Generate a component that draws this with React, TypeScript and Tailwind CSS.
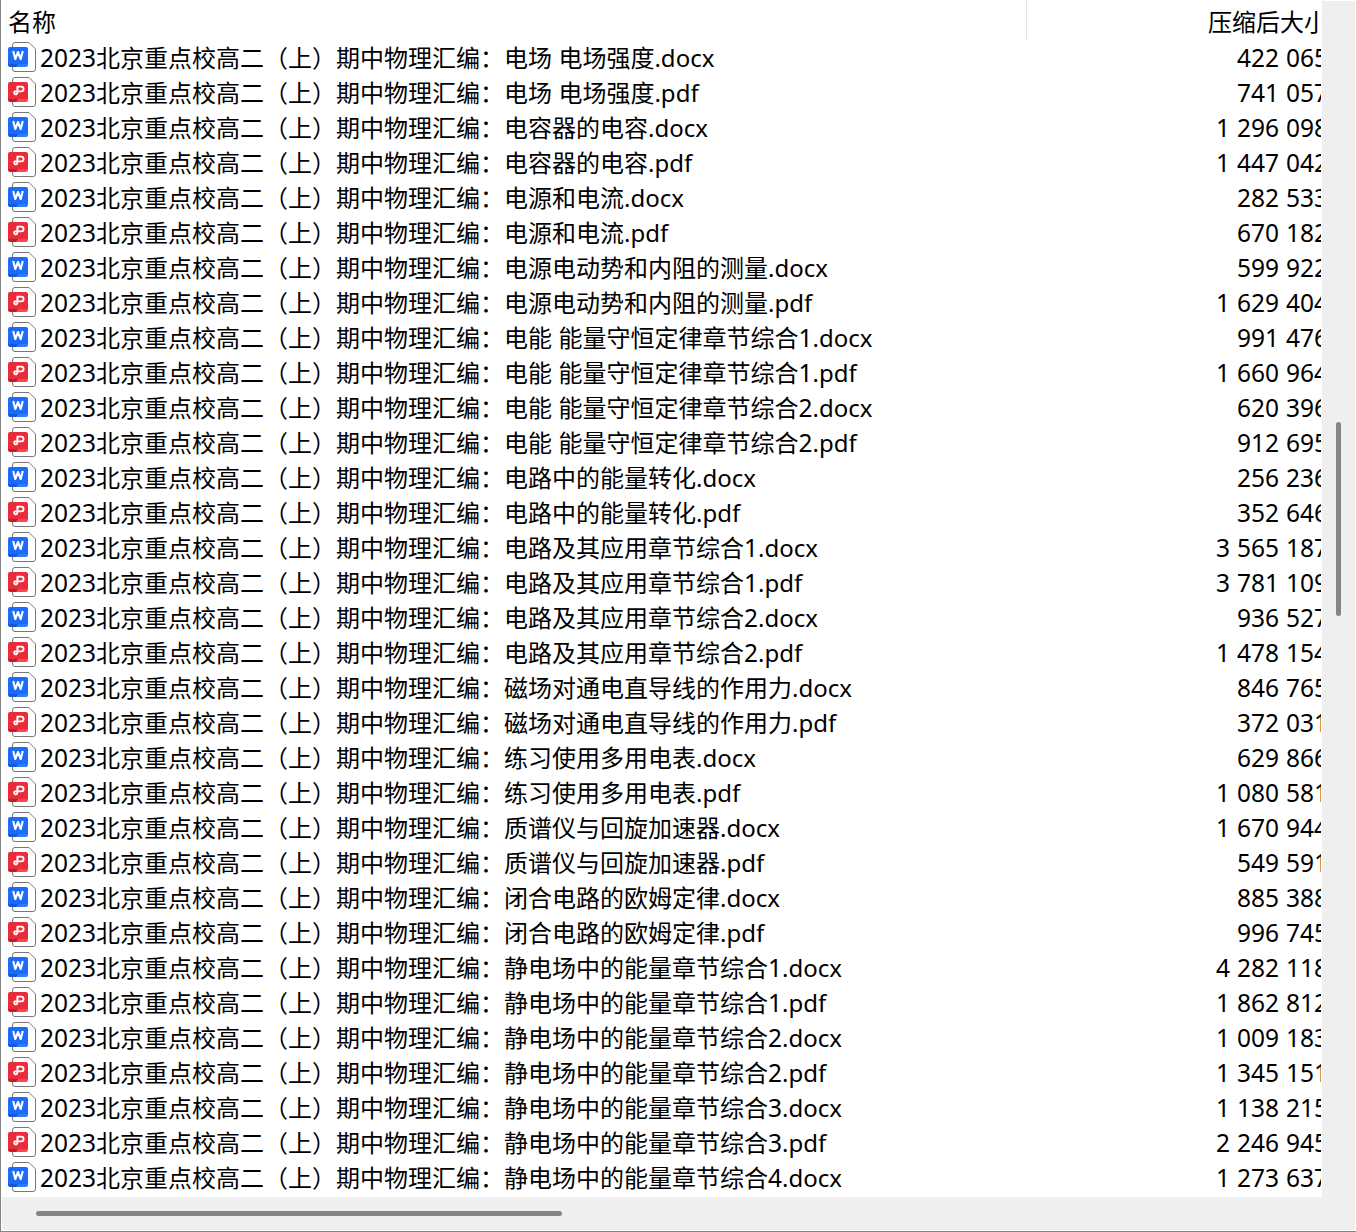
import React from "react";

type FileRow = { topic: string; ext: "docx" | "pdf"; size: string };

const PREFIX = "2023北京重点校高二（上）期中物理汇编：";

const files: FileRow[] = [
  { topic: "电场 电场强度", ext: "docx", size: "422 065" },
  { topic: "电场 电场强度", ext: "pdf", size: "741 057" },
  { topic: "电容器的电容", ext: "docx", size: "1 296 098" },
  { topic: "电容器的电容", ext: "pdf", size: "1 447 042" },
  { topic: "电源和电流", ext: "docx", size: "282 533" },
  { topic: "电源和电流", ext: "pdf", size: "670 182" },
  { topic: "电源电动势和内阻的测量", ext: "docx", size: "599 922" },
  { topic: "电源电动势和内阻的测量", ext: "pdf", size: "1 629 404" },
  { topic: "电能 能量守恒定律章节综合1", ext: "docx", size: "991 476" },
  { topic: "电能 能量守恒定律章节综合1", ext: "pdf", size: "1 660 964" },
  { topic: "电能 能量守恒定律章节综合2", ext: "docx", size: "620 396" },
  { topic: "电能 能量守恒定律章节综合2", ext: "pdf", size: "912 695" },
  { topic: "电路中的能量转化", ext: "docx", size: "256 236" },
  { topic: "电路中的能量转化", ext: "pdf", size: "352 646" },
  { topic: "电路及其应用章节综合1", ext: "docx", size: "3 565 187" },
  { topic: "电路及其应用章节综合1", ext: "pdf", size: "3 781 109" },
  { topic: "电路及其应用章节综合2", ext: "docx", size: "936 527" },
  { topic: "电路及其应用章节综合2", ext: "pdf", size: "1 478 154" },
  { topic: "磁场对通电直导线的作用力", ext: "docx", size: "846 765" },
  { topic: "磁场对通电直导线的作用力", ext: "pdf", size: "372 031" },
  { topic: "练习使用多用电表", ext: "docx", size: "629 866" },
  { topic: "练习使用多用电表", ext: "pdf", size: "1 080 581" },
  { topic: "质谱仪与回旋加速器", ext: "docx", size: "1 670 944" },
  { topic: "质谱仪与回旋加速器", ext: "pdf", size: "549 591" },
  { topic: "闭合电路的欧姆定律", ext: "docx", size: "885 388" },
  { topic: "闭合电路的欧姆定律", ext: "pdf", size: "996 745" },
  { topic: "静电场中的能量章节综合1", ext: "docx", size: "4 282 118" },
  { topic: "静电场中的能量章节综合1", ext: "pdf", size: "1 862 812" },
  { topic: "静电场中的能量章节综合2", ext: "docx", size: "1 009 183" },
  { topic: "静电场中的能量章节综合2", ext: "pdf", size: "1 345 151" },
  { topic: "静电场中的能量章节综合3", ext: "docx", size: "1 138 215" },
  { topic: "静电场中的能量章节综合3", ext: "pdf", size: "2 246 945" },
  { topic: "静电场中的能量章节综合4", ext: "docx", size: "1 273 637" },
];

function FileIcon({ ext }: { ext: FileRow["ext"] }) {
  const isDoc = ext === "docx";
  return (
    <svg width="28" height="30" viewBox="0 0 28 30" fill="none" className="shrink-0">
      {/* Page with a cut corner */}
      <path
        d="M7 .5H21L27.5 7V27Q27.5 29.5 25 29.5H7Q4.5 29.5 4.5 27V3Q4.5 .5 7 .5Z"
        fill="#fff"
        stroke="#777"
      />
      <path d="M0 20H10V25H2Q0 25 0 23Z" fill={isDoc ? "#1659d8" : "#c41c2b"} />
      <path d="M8 25L11 21H20V23Q20 25 18 25Z" fill={isDoc ? "#2b7cff" : "#fb4650"} />
      <path d="M2 5H18Q20 5 20 7V22H0V7Q0 5 2 5Z" fill={isDoc ? "#1c6cf9" : "#ea2b3a"} />
      {isDoc ? (
        <path
          d="M5.2 9L7.3 17L10 10L12.7 17L14.8 9"
          stroke="#fff"
          strokeWidth="2.1"
          strokeLinejoin="round"
        />
      ) : (
        <path
          d="M9.6 13V9.6H13.2A2.4 2.4 0 0 1 13.2 14.4H7A1.6 1.6 0 1 0 9.3 16.2V9.6"
          stroke="#fff"
          strokeWidth="1.8"
        />
      )}
    </svg>
  );
}

// Digits are set a little larger than the Chinese text around them
function MixedText({ text }: { text: string }) {
  return (
    <>
      {text.split(/(\d+| )/).map((part, i) => {
        if (/^[\d ]/.test(part)) {
          return (
            <span key={i} className="text-[24.5px]">
              {part}
            </span>
          );
        }
        return <React.Fragment key={i}>{part}</React.Fragment>;
      })}
    </>
  );
}

export default function App() {
  return (
    <div className="flex h-[1232px] w-[1356px] flex-col overflow-hidden border-b border-l border-[#858588] bg-white pl-px font-['Noto_Sans','Noto_Sans_CJK_SC',sans-serif] text-2xl text-black">
      <div className="flex h-[1197px] shrink-0">
        <div className="mr-px w-[1319px] shrink-0 overflow-hidden">
          <div className="flex h-[41px] leading-[43px]">
            <div className="h-10 w-[1025px] shrink-0 border-r border-[#e5e5e5] pl-1.5">名称</div>
            <div className="shrink-0 pl-[181px] whitespace-nowrap">压缩后大小</div>
          </div>
          {files.map((file) => (
            <div key={file.topic + file.ext} className="flex h-[35px] w-[1326px] pl-1.5 leading-[33px] whitespace-pre">
              <div className="pt-px">
                <FileIcon ext={file.ext} />
              </div>
              <div className="flex-1 pl-1">
                <MixedText text={`${PREFIX}${file.topic}.${file.ext}`} />
              </div>
              <div className="text-right text-[24.5px] [word-spacing:0.6px]">{file.size}</div>
            </div>
          ))}
        </div>
        {/* Vertical scrollbar */}
        <div className="mt-px w-[33px] shrink-0 bg-[#efefef] pt-[421px] pl-3.5">
          <div className="h-[194px] w-[5px] rounded-full bg-[#858585]" />
        </div>
      </div>
      {/* Horizontal scrollbar */}
      <div className="h-[33px] w-[1353px] shrink-0 bg-[#efefef] pt-3.5 pl-[34px]">
        <div className="h-[5px] w-[526px] rounded-full bg-[#858585]" />
      </div>
    </div>
  );
}
